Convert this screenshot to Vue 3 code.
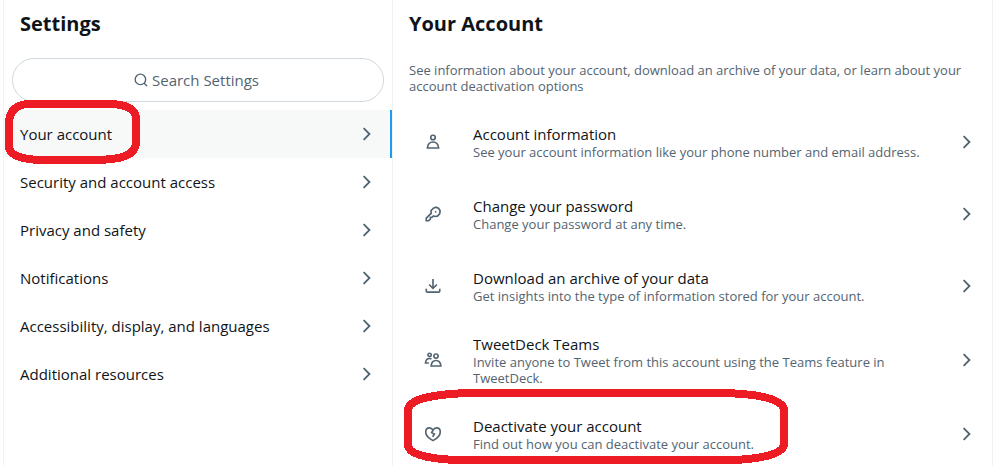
<template>
  <main class="settings">
    <section class="panel nav-panel">
      <h2 class="title">Settings</h2>
      <label class="search" for="search-settings">
        <svg class="search-icon" viewBox="0 0 24 24" aria-hidden="true">
          <circle cx="11" cy="11" r="9" />
          <path d="M17 17l5.5 5.5" />
        </svg>
        <input id="search-settings" v-model="query" type="text" placeholder="Search Settings" aria-label="Search Settings">
      </label>
      <nav>
        <a
          v-for="item in sections"
          :key="item"
          href="#"
          class="nav-item"
          :class="{ active: item === current }"
          @click.prevent="current = item"
        >
          <span>{{ item }}</span>
          <svg class="chevron" viewBox="0 0 24 24" aria-hidden="true"><path :d="chevron" /></svg>
          <svg v-if="item === 'Your account'" class="marker marker-nav" viewBox="0 0 135 64" aria-hidden="true">
            <path d="M22 4H106Q131 5 131 19V43Q130 57 106 59L96 60H36Q4 59 4 46V22Q5 6 22 4Z" />
          </svg>
        </a>
      </nav>
    </section>

    <section class="panel">
      <h2 class="title">Your Account</h2>
      <p class="intro">
        See information about your account, download an archive of your data, or learn about your account deactivation options
      </p>
      <a v-for="option in options" :key="option.title" href="#" class="option" @click.prevent>
        <span class="option-icon">
          <svg viewBox="0 0 24 24" aria-hidden="true"><path v-for="d in option.icon" :key="d" :d="d" /></svg>
        </span>
        <span class="option-text">
          <span class="option-title">{{ option.title }}</span>
          <span class="option-info">{{ option.info }}</span>
        </span>
        <svg class="chevron" viewBox="0 0 24 24" aria-hidden="true"><path :d="chevron" /></svg>
        <svg v-if="option.marked" class="marker marker-option" viewBox="0 0 384 75" aria-hidden="true">
          <path d="M64 4H317Q376 5 380 20V56Q377 69 329 71H52Q6 69 4 57V20Q7 6 64 4Z" />
        </svg>
      </a>
    </section>
  </main>
</template>

<script setup>
import { ref } from 'vue';

const query = ref('');
const current = ref('Your account');

const sections = [
  'Your account',
  'Security and account access',
  'Privacy and safety',
  'Notifications',
  'Accessibility, display, and languages',
  'Additional resources',
];

const chevron = 'M7.5 4.3L15.3 12l-7.8 7.7';

const options = [
  {
    title: 'Account information',
    info: 'See your account information like your phone number and email address.',
    icon: ['M12 3a3 3 0 1 0 0 6a3 3 0 1 0 0-6z', 'M4.5 20h15c-.5-5-3.2-8-7.5-8s-7 3-7.5 8z'],
  },
  {
    title: 'Change your password',
    info: 'Change your password at any time.',
    icon: [
      'M12.5 4.2l3.2-1.2 3.6 1.3 2.2 3.4-.6 4.2-3 3-3.8.4-1.6-.7-1.7 1.7H8.6v2.3L6.2 21H3v-3.4l6.8-6.8-.5-3.1z',
      'M14.5 9h2',
    ],
  },
  {
    title: 'Download an archive of your data',
    info: 'Get insights into the type of information stored for your account.',
    icon: ['M12 2.5V15', 'M6.8 10L12 15.2 17.2 10', 'M3 15.5v3.2c0 .9.6 1.5 1.5 1.5h15c.9 0 1.5-.6 1.5-1.5v-3.2'],
  },
  {
    title: 'TweetDeck Teams',
    info: 'Invite anyone to Tweet from this account using the Teams feature in TweetDeck.',
    icon: [
      'M7.5 3a2.2 2.2 0 1 0 0 4.4a2.2 2.2 0 1 0 0-4.4z',
      'M16 4a2.8 2.8 0 1 0 0 5.6a2.8 2.8 0 1 0 0-5.6z',
      'M9.5 20H22.5c-.4-4.7-2.7-7.3-6.5-7.3s-6.1 2.6-6.5 7.3z',
      'M6.5 16H2c.3-3.7 2-6 5.5-6 1 0 1.8.2 2.5.6',
    ],
  },
  {
    title: 'Deactivate your account',
    info: 'Find out how you can deactivate your account.',
    icon: [
      'M12 20.8C5.5 17.2 2.3 13.2 2.3 9.2C2.3 6 4.5 3.9 7.2 3.9c2 0 3.7 1 4.8 2.9 1.1-1.9 2.8-2.9 4.8-2.9 2.7 0 4.9 2.1 4.9 5.3 0 4-3.2 8-9.7 11.6z',
      'M12 6.8l-1.8 3.4 3.6 1.8-2.3 3.6',
    ],
    marked: true,
  },
];
</script>

<style>
body {
  margin: 0;
  background: #fff;
}
</style>

<style scoped>
.settings {
  display: grid;
  grid-template-columns: 390fr 600fr;
  height: 100vh;
  margin: 0 13px 0 3px;
  overflow: hidden;
  color: #0f1419;
  font-family: "Open Sans", "Noto Sans", sans-serif;
  font-size: 15px;
  font-weight: 400;
  line-height: 20px;
}

.panel {
  border-right: 1px solid #eff3f4;
}

.nav-panel {
  border-left: 1px solid #eff3f4;
}

.title {
  margin: 0;
  padding: 12px 16px;
  font-size: 20px;
  font-weight: 700;
  line-height: 24px;
}

/* Search box */
.search {
  display: flex;
  align-items: center;
  justify-content: center;
  gap: 4px;
  box-sizing: border-box;
  height: 44px;
  margin: 10px 8px 8px;
  border: 1px solid #cfd9de;
  border-radius: 22px;
  cursor: text;
}

.search input {
  width: 110px;
  padding: 0;
  border: none;
  outline: none;
  background: transparent;
  color: #0f1419;
  font: inherit;
}

.search input::placeholder {
  color: #536471;
  opacity: 1;
}

.search-icon {
  width: 14px;
  height: 14px;
  fill: none;
  stroke: #536471;
  stroke-width: 2.4;
}

/* Left menu */
.nav-item {
  position: relative;
  display: flex;
  align-items: center;
  justify-content: space-between;
  height: 48px;
  padding: 0 16px;
  color: inherit;
  text-decoration: none;
}

.nav-item.active {
  background: #f7f9f9;
  box-shadow: inset -2px 0 #1d9bf0;
}

.chevron {
  flex: none;
  width: 18px;
  height: 18px;
  fill: none;
  stroke: #536471;
  stroke-width: 2.4;
}

/* Account options */
.intro {
  margin: 0;
  padding: 14px 16px 12px;
  color: #536471;
  font-size: 13px;
  line-height: 16px;
}

.option {
  position: relative;
  display: flex;
  align-items: center;
  gap: 16px;
  box-sizing: border-box;
  min-height: 72px;
  padding: 12px 16px;
  color: inherit;
  text-decoration: none;
}

.option-icon {
  display: flex;
  flex: none;
  justify-content: center;
  width: 48px;
}

.option-icon svg {
  width: 18px;
  height: 18px;
  fill: none;
  stroke: #536471;
  stroke-width: 2.2;
}

.option-text {
  flex: 1;
}

.option-title,
.option-info {
  display: block;
}

.option-info {
  color: #536471;
  font-size: 13px;
  line-height: 16px;
}

/* Red hand-drawn outlines */
.marker {
  position: absolute;
  z-index: 1;
  fill: none;
  stroke: #ed1c24;
  stroke-width: 8;
  shape-rendering: crispEdges;
  pointer-events: none;
}

.marker-nav {
  top: -10px;
  left: 1px;
  width: 135px;
  height: 64px;
}

.marker-option {
  top: -9px;
  left: 11px;
  width: 384px;
  height: 75px;
}
</style>
